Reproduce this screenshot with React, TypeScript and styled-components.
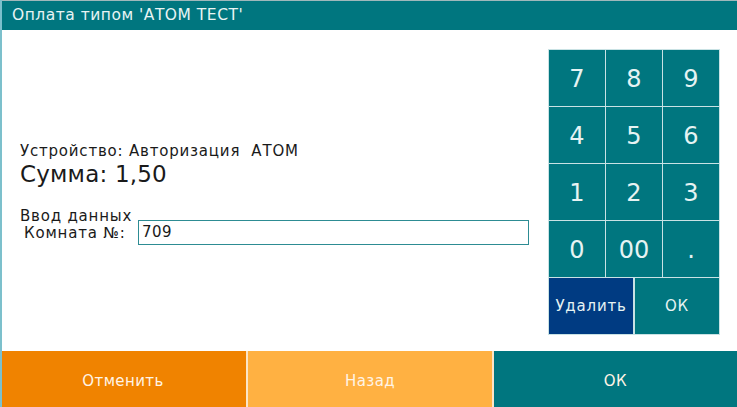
import styled, { createGlobalStyle } from "styled-components";

const GlobalStyle = createGlobalStyle`
  html, body {
    margin: 0;
    padding: 0;
    background: #ffffff;
  }
  body {
    font-family: "DejaVu Sans", "Open Sans", sans-serif;
  }
`;

const Window = styled.div`
  width: 737px;
  height: 407px;
  display: flex;
  flex-direction: column;
  background: #ffffff;
  border-left: 2px solid #7cc0cc;
  box-sizing: border-box;
  overflow: hidden;
`;

const TitleBar = styled.div`
  height: 30px;
  flex: none;
  background: #00767f;
  border-top: 1px solid #9fb8bb;
  box-sizing: border-box;
  color: #e8f4f4;
  font-size: 15.5px;
  letter-spacing: 0.5px;
  line-height: 28px;
  padding-left: 10px;
`;

const Body = styled.div`
  flex: 1;
  display: flex;
  justify-content: space-between;
  padding: 20px 18px 0 18px;
`;

const InfoPanel = styled.div`
  display: flex;
  flex-direction: column;
  padding-top: 92px;
  color: #1a1a1a;
  font-size: 15px;
  letter-spacing: 0.8px;
`;

const DeviceLine = styled.div`
  line-height: 18px;
  white-space: pre;
`;

const SumLine = styled.div`
  font-size: 23px;
  letter-spacing: 0.2px;
  line-height: 26px;
  margin-top: 1px;
`;

const InputLabel = styled.div`
  line-height: 18px;
  margin-top: 20px;
`;

const FieldRow = styled.div`
  display: flex;
  align-items: center;
  margin-top: -5px;
`;

const FieldLabel = styled.span`
  width: 114px;
  padding-left: 4px;
`;

const Field = styled.div`
  width: 391px;
  height: 25px;
  border: 1px solid #2d8c93;
  box-sizing: border-box;
  line-height: 23px;
  padding-left: 3px;
  letter-spacing: 0.5px;
`;

const Keypad = styled.div`
  display: grid;
  grid-template-columns: repeat(3, 56px);
  grid-auto-rows: 56px;
  gap: 1px;
  background: #ffffff;
  align-self: flex-start;
`;

const Key = styled.div`
  background: #00767f;
  color: #e6f3f3;
  font-size: 24px;
  display: flex;
  align-items: center;
  justify-content: center;
  padding-top: 2px;
  box-shadow: 0 0 0 1px #c9e2e4;
`;

const ActionRow = styled.div`
  grid-column: 1 / span 3;
  display: grid;
  grid-template-columns: 84px 1fr;
  gap: 2px;
`;

const ActionKey = styled.div<{ dark?: boolean }>`
  background: ${(p) => (p.dark ? "#003b82" : "#00767f")};
  color: #e6f3f3;
  font-size: 15px;
  letter-spacing: 0.8px;
  display: flex;
  align-items: center;
  justify-content: center;
  box-shadow: 0 0 0 1px #c9e2e4;
`;

const Footer = styled.div`
  height: 56px;
  flex: none;
  display: grid;
  grid-template-columns: 246px 244px 1fr;
  gap: 2px;
  margin-left: -2px;
  background: #fbe5c8;
`;

const FooterButton = styled.div<{ color: string }>`
  background: ${(p) => p.color};
  color: #fff4e6;
  font-size: 15px;
  letter-spacing: 0.4px;
  display: flex;
  align-items: center;
  justify-content: center;
  padding-top: 4px;
`;

const keys = ["7", "8", "9", "4", "5", "6", "1", "2", "3", "0", "00", "."];

export default function App() {
  return (
    <>
      <GlobalStyle />
      <Window>
        <TitleBar>Оплата типом 'АТОМ ТЕСТ'</TitleBar>
        <Body>
          <InfoPanel>
            <DeviceLine>Устройство: Авторизация  АТОМ</DeviceLine>
            <SumLine>Сумма: 1,50</SumLine>
            <InputLabel>Ввод данных</InputLabel>
            <FieldRow>
              <FieldLabel>Комната №:</FieldLabel>
              <Field>709</Field>
            </FieldRow>
          </InfoPanel>
          <Keypad>
            {keys.map((k) => (
              <Key key={k}>{k}</Key>
            ))}
            <ActionRow>
              <ActionKey dark>Удалить</ActionKey>
              <ActionKey>ОК</ActionKey>
            </ActionRow>
          </Keypad>
        </Body>
        <Footer>
          <FooterButton color="#f08300">Отменить</FooterButton>
          <FooterButton color="#ffb142">Назад</FooterButton>
          <FooterButton color="#00767f">ОК</FooterButton>
        </Footer>
      </Window>
    </>
  );
}
